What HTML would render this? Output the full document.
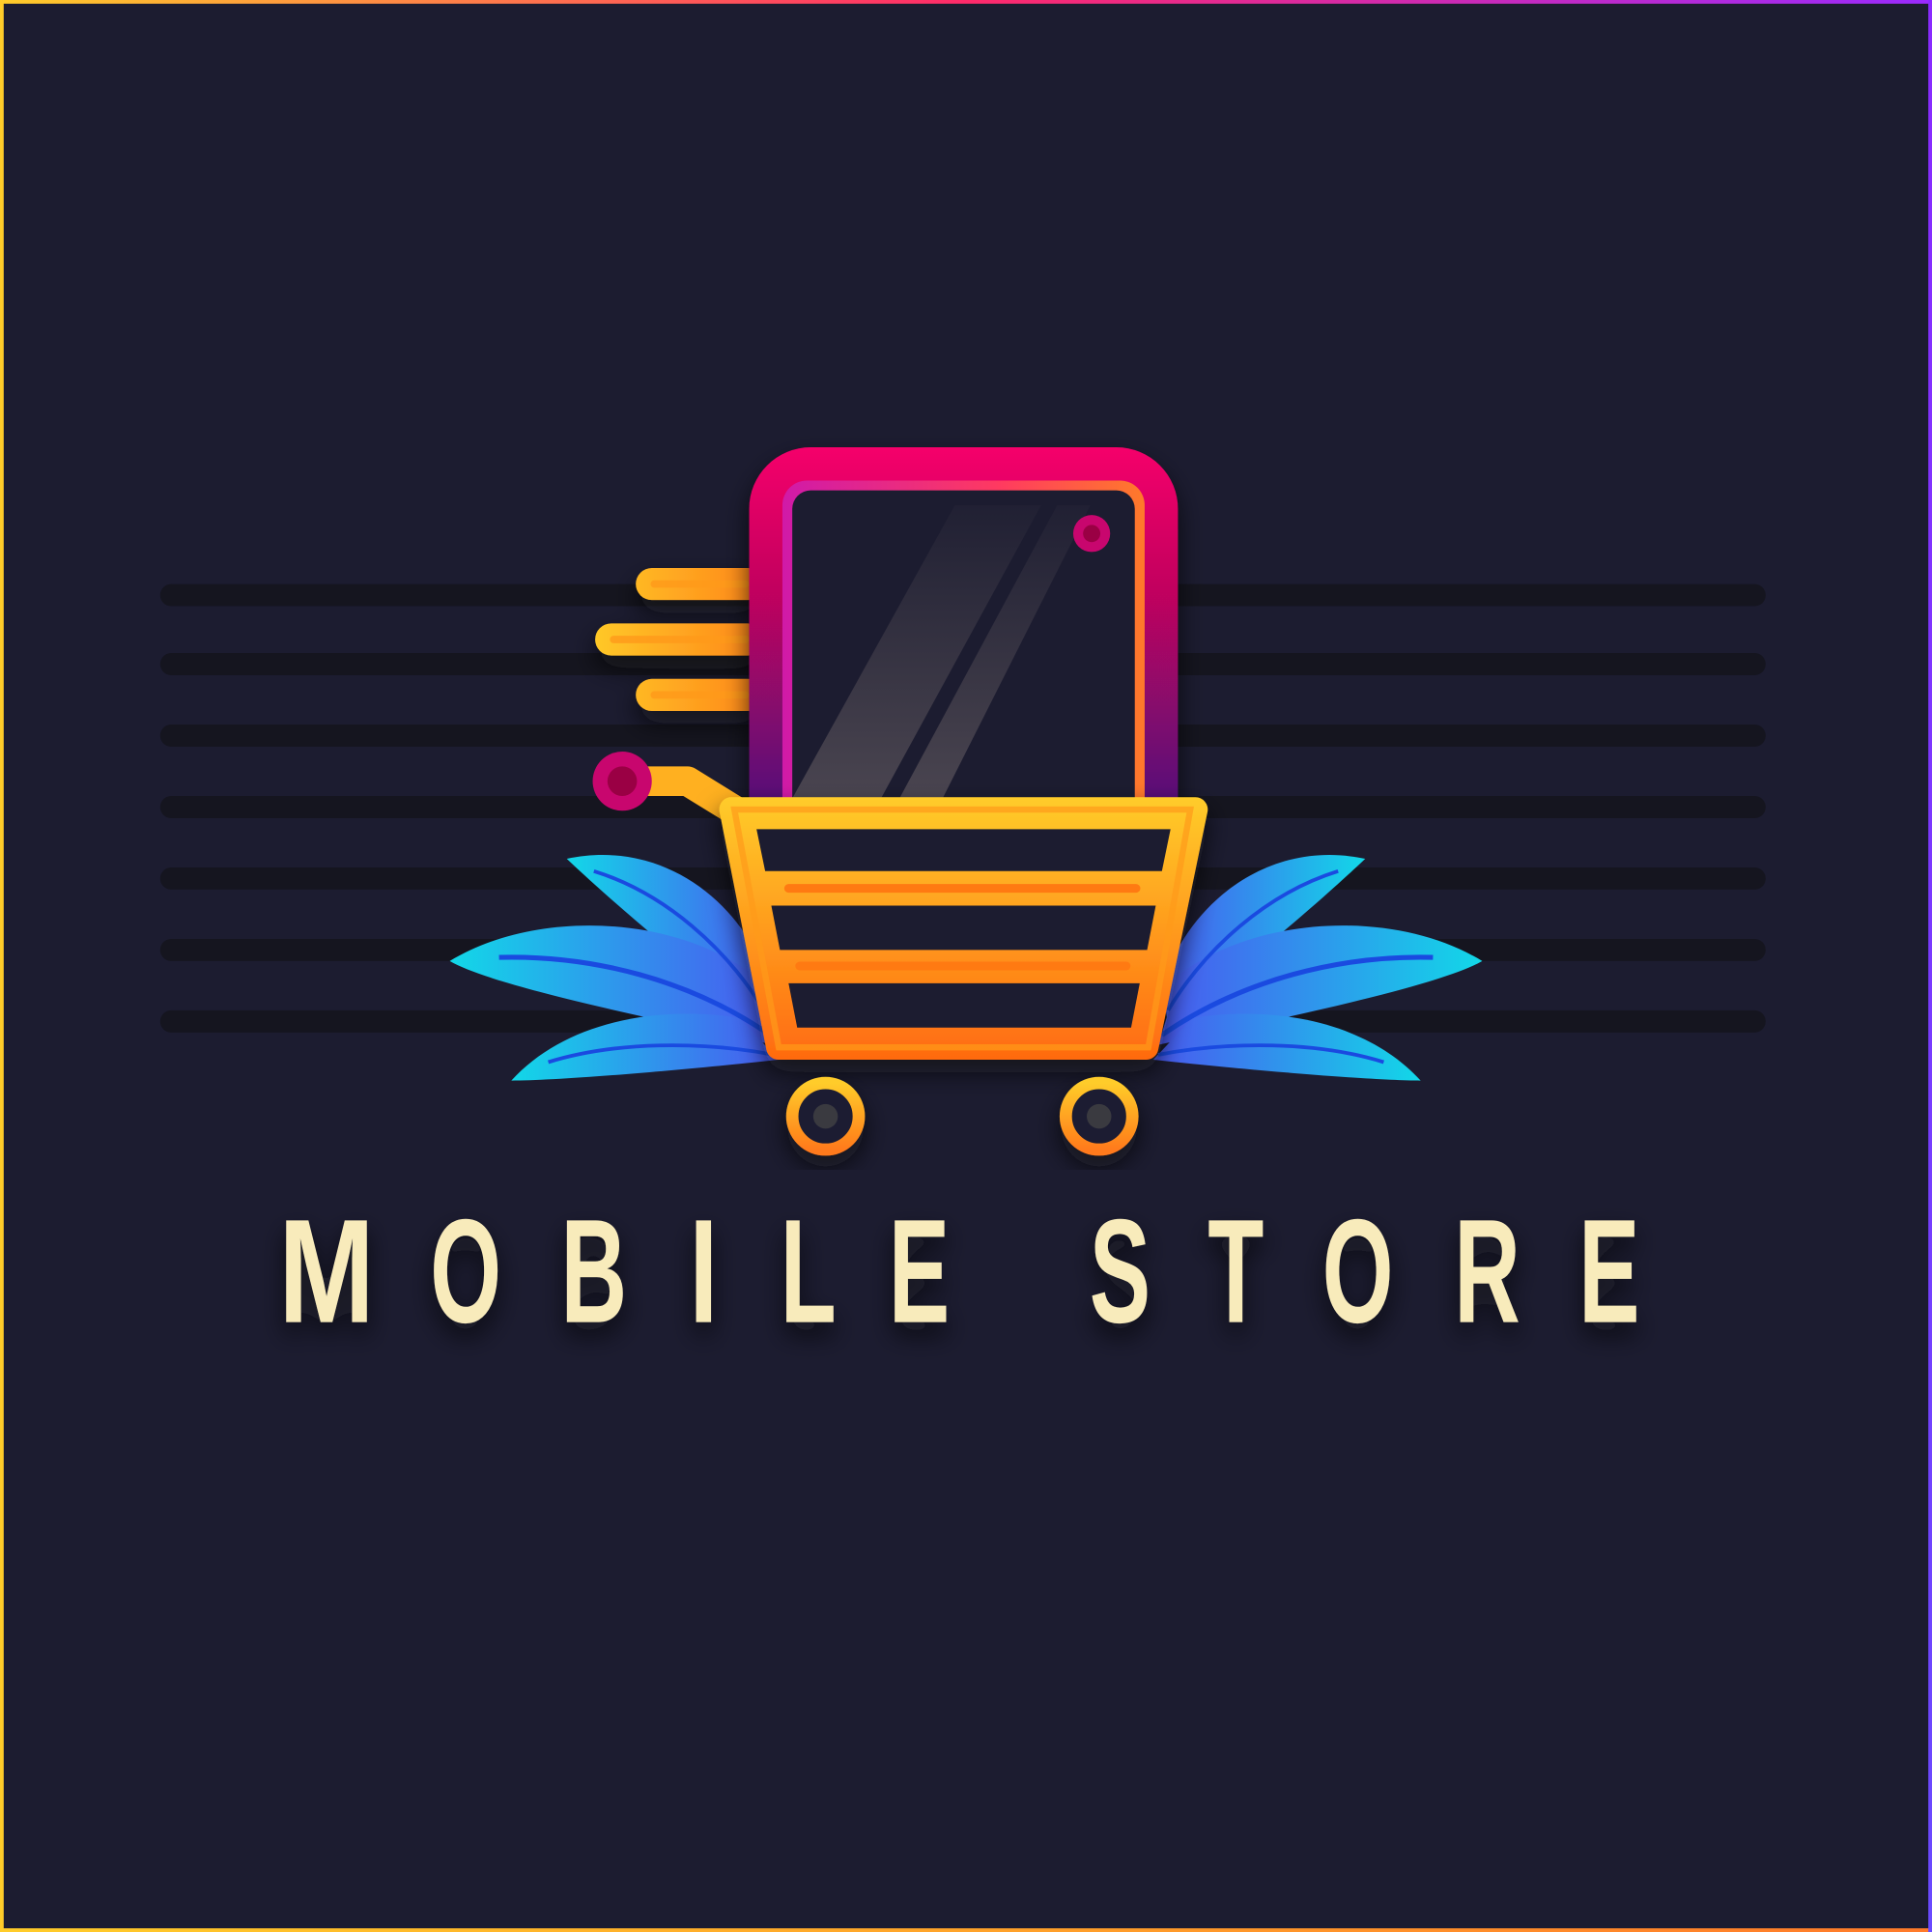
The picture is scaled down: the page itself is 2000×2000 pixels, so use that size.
<!DOCTYPE html>
<html><head><meta charset="utf-8"><style>
html,body{margin:0;padding:0;background:#1c1c30;}
svg{display:block}
</style></head><body>
<svg width="2000" height="2000" viewBox="0 0 1568 1568" xmlns="http://www.w3.org/2000/svg">
<defs>
<linearGradient id="bt" x1="0" x2="1"><stop offset="0" stop-color="#ffcc2a"/><stop offset="0.5" stop-color="#ff2a6a"/><stop offset="1" stop-color="#9a2aff"/></linearGradient>
<linearGradient id="bb" x1="0" x2="1"><stop offset="0" stop-color="#ffcc2a"/><stop offset="1" stop-color="#ff7a2a"/></linearGradient>
<linearGradient id="br" x1="0" y1="0" x2="0" y2="1"><stop offset="0" stop-color="#8a2aff"/><stop offset="1" stop-color="#6a4aff"/></linearGradient>
<linearGradient id="ph" x1="0" y1="0" x2="0" y2="1"><stop offset="0" stop-color="#f5066a"/><stop offset="0.4" stop-color="#c0065e"/><stop offset="1" stop-color="#50087a"/></linearGradient>
<linearGradient id="ph2" x1="0" x2="1"><stop offset="0" stop-color="#d01aa8"/><stop offset="0.6" stop-color="#ff3a60"/><stop offset="1" stop-color="#ff7a2a"/></linearGradient>
<linearGradient id="gl" x1="0" y1="0" x2="0" y2="1"><stop offset="0" stop-color="#4a4550" stop-opacity="0.1"/><stop offset="1" stop-color="#4a4550" stop-opacity="1"/></linearGradient>
<linearGradient id="yo" gradientUnits="userSpaceOnUse" x1="483" y1="0" x2="610" y2="0"><stop offset="0" stop-color="#ffc828"/><stop offset="1" stop-color="#ff8a1a"/></linearGradient>
<linearGradient id="bk" x1="0" y1="0" x2="0" y2="1"><stop offset="0" stop-color="#ffcc2a"/><stop offset="1" stop-color="#ff6a10"/></linearGradient>
<linearGradient id="wh" x1="0" y1="0" x2="0" y2="1"><stop offset="0" stop-color="#ffcc2a"/><stop offset="1" stop-color="#ff7a1a"/></linearGradient>
<linearGradient id="lfL" x1="0" x2="1"><stop offset="0" stop-color="#12d8e8"/><stop offset="1" stop-color="#4a58f0"/></linearGradient>
<filter id="sh" x="-20%" y="-20%" width="140%" height="150%"><feDropShadow dx="0" dy="10" stdDeviation="10" flood-color="#0a0a14" flood-opacity="0.7"/></filter>
</defs>
<rect width="1568" height="1568" fill="#1c1c30"/>
<rect x="0" y="0" width="1568" height="3" fill="url(#bt)"/>
<rect x="0" y="1565" width="1568" height="3" fill="url(#bb)"/>
<rect x="0" y="0" width="3" height="1568" fill="#ffcc2a"/>
<rect x="1565" y="0" width="3" height="1568" fill="url(#br)"/>
<g fill="#15151f">
<rect x="130" y="474" width="1303" height="18" rx="9"/>
<rect x="130" y="530" width="1303" height="18" rx="9"/>
<rect x="130" y="588" width="1303" height="18" rx="9"/>
<rect x="130" y="646" width="1303" height="18" rx="9"/>
<rect x="130" y="704" width="1303" height="18" rx="9"/>
<rect x="130" y="762" width="1303" height="18" rx="9"/>
<rect x="130" y="820" width="1303" height="18" rx="9"/>
</g>
<!-- speed lines -->
<g fill="url(#yo)" filter="url(#sh)">
<rect x="516" y="461" width="104" height="26" rx="13"/>
<rect x="483" y="506" width="137" height="26" rx="13"/>
<rect x="516" y="551" width="104" height="26" rx="13"/>
</g>
<g fill="#ff9a1a" opacity="0.8">
<rect x="528" y="471" width="80" height="6" rx="3"/>
<rect x="495" y="516" width="113" height="6" rx="3"/>
<rect x="528" y="561" width="80" height="6" rx="3"/>
</g>
<!-- phone -->
<g filter="url(#sh)">
<path d="M608,660 V413 a50,50 0 0 1 50,-50 H906 a50,50 0 0 1 50,50 V660 Z" fill="url(#ph)"/>
</g>
<path d="M635,660 V410 a20,20 0 0 1 20,-20 H909 a20,20 0 0 1 20,20 V660 Z" fill="url(#ph2)"/>
<path d="M643,660 V413 a15,15 0 0 1 15,-15 H906 a15,15 0 0 1 15,15 V660 Z" fill="#1c1c30"/>
<polygon points="775,410 845,410 715,648 643,648" fill="url(#gl)"/>
<polygon points="858,410 885,410 765,648 730,648" fill="url(#gl)"/>
<circle cx="886" cy="433" r="15" fill="#c8066e"/><circle cx="886" cy="433" r="7" fill="#9a0044"/>
<!-- leaves -->
<g>
<path d="M460,697 C540,680 605,735 625,800 L620,832 C560,785 500,735 460,697 Z" fill="url(#lfL)"/>
<path d="M365,780 C430,740 540,740 610,790 L628,848 C520,825 400,800 365,780 Z" fill="url(#lfL)"/>
<path d="M415,877 C455,833 525,815 600,826 L632,860 C540,870 450,877 415,877 Z" fill="url(#lfL)"/>
<path d="M482,707 C540,725 590,770 620,820" stroke="#1a4ae0" stroke-width="3" fill="none"/>
<path d="M405,777 C480,775 560,795 625,840" stroke="#1a4ae0" stroke-width="4" fill="none"/>
<path d="M445,862 C500,845 570,845 628,856" stroke="#1a4ae0" stroke-width="3" fill="none"/>
</g>
<g transform="translate(1568,0) scale(-1,1)">
<path d="M460,697 C540,680 605,735 625,800 L620,832 C560,785 500,735 460,697 Z" fill="url(#lfL)"/>
<path d="M365,780 C430,740 540,740 610,790 L628,848 C520,825 400,800 365,780 Z" fill="url(#lfL)"/>
<path d="M415,877 C455,833 525,815 600,826 L632,860 C540,870 450,877 415,877 Z" fill="url(#lfL)"/>
<path d="M482,707 C540,725 590,770 620,820" stroke="#1a4ae0" stroke-width="3" fill="none"/>
<path d="M405,777 C480,775 560,795 625,840" stroke="#1a4ae0" stroke-width="4" fill="none"/>
<path d="M445,862 C500,845 570,845 628,856" stroke="#1a4ae0" stroke-width="3" fill="none"/>
</g>
<!-- handle -->
<path d="M505,634 H558 L605,663" stroke="#ffb020" stroke-width="24" fill="none" stroke-linejoin="round"/>
<circle cx="505" cy="634" r="24" fill="#c8066e"/><circle cx="505" cy="634" r="12" fill="#9a0044"/>
<!-- basket -->
<g filter="url(#sh)">
<path d="M592,647 H970 a10,10 0 0 1 10,12 L940,852 a10,10 0 0 1 -10,8 H632 a10,10 0 0 1 -10,-8 L584,659 a10,10 0 0 1 8,-12 Z" fill="url(#bk)"/>
</g>
<path d="M596,657 H966 L932,850 H632 Z" fill="none" stroke="#ff9a1a" stroke-width="5" opacity="0.7"/>
<g fill="#1c1c30">
<polygon points="614,673 950,673 943,707 621,707"/>
<polygon points="626,735 938,735 931,771 633,771"/>
<polygon points="640,798 925,798 918,834 647,834"/>
</g>
<g stroke="#ff7a12" stroke-width="7" stroke-linecap="round">
<line x1="640" y1="721" x2="922" y2="721"/><line x1="649" y1="784" x2="914" y2="784"/>
</g>
<!-- wheels -->
<g filter="url(#sh)">
<circle cx="670" cy="906" r="27" fill="#1c1c30" stroke="url(#wh)" stroke-width="10"/>
<circle cx="892" cy="906" r="27" fill="#1c1c30" stroke="url(#wh)" stroke-width="10"/>
</g>
<circle cx="670" cy="906" r="10" fill="#3a3a40"/><circle cx="892" cy="906" r="10" fill="#3a3a40"/>
<!-- text -->
<g font-family="'Liberation Sans',sans-serif" font-weight="bold" font-size="120" fill="#f8ebbb" text-anchor="middle" filter="url(#sh)">
<text transform="translate(265,1073) scale(0.78,1)">M</text>
<text transform="translate(378,1073) scale(0.62,1)">O</text>
<text transform="translate(482,1073) scale(0.62,1)">B</text>
<text transform="translate(571,1073) scale(0.7,1)">I</text>
<text transform="translate(656,1073) scale(0.62,1)">L</text>
<text transform="translate(746,1073) scale(0.62,1)">E</text>
<text transform="translate(909,1073) scale(0.62,1)">S</text>
<text transform="translate(1003,1073) scale(0.62,1)">T</text>
<text transform="translate(1102,1073) scale(0.62,1)">O</text>
<text transform="translate(1207,1073) scale(0.62,1)">R</text>
<text transform="translate(1306,1073) scale(0.62,1)">E</text>
</g>
</svg>
</body></html>
